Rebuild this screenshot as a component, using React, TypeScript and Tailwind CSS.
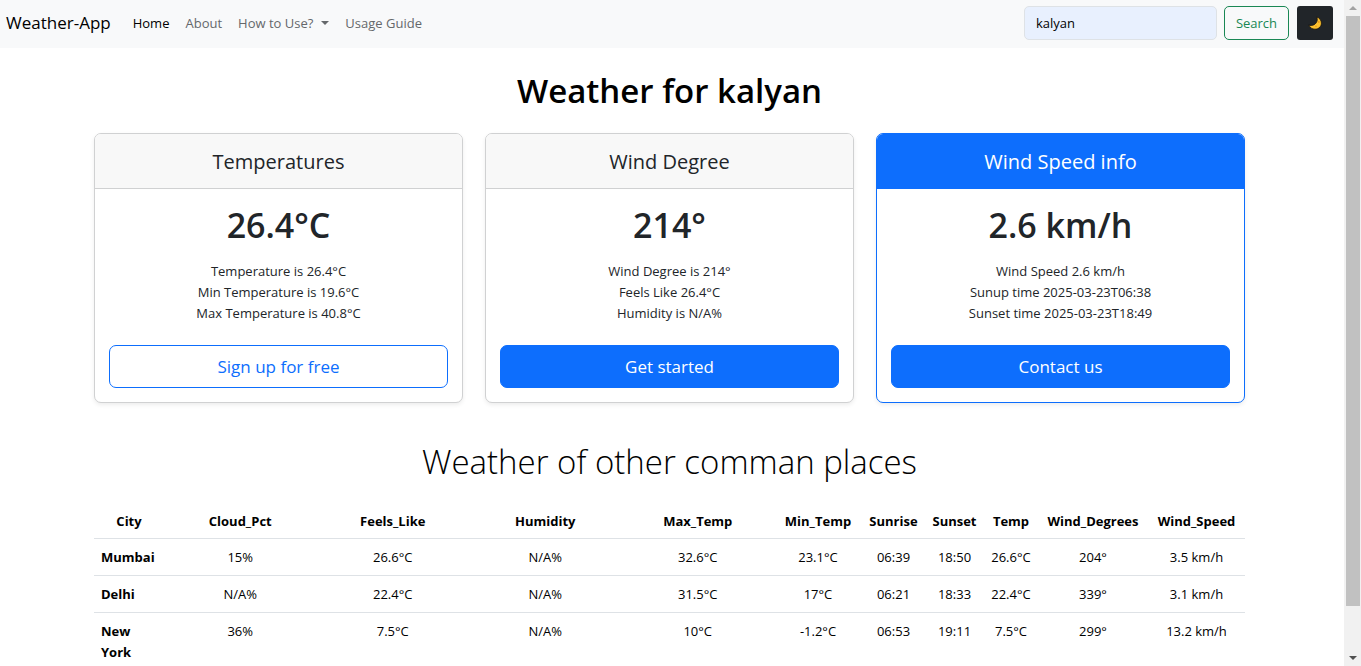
import { useState } from "react";

type Card = {
  title: string;
  value: string;
  lines: string[];
  action: string;
  outline?: boolean;
  highlight?: boolean;
};

const cards: Card[] = [
  {
    title: "Temperatures",
    value: "26.4°C",
    lines: ["Temperature is 26.4°C", "Min Temperature is 19.6°C", "Max Temperature is 40.8°C"],
    action: "Sign up for free",
    outline: true,
  },
  {
    title: "Wind Degree",
    value: "214°",
    lines: ["Wind Degree is 214°", "Feels Like 26.4°C", "Humidity is N/A%"],
    action: "Get started",
  },
  {
    title: "Wind Speed info",
    value: "2.6 km/h",
    lines: ["Wind Speed 2.6 km/h", "Sunup time 2025-03-23T06:38", "Sunset time 2025-03-23T18:49"],
    action: "Contact us",
    highlight: true,
  },
];

const columns = [
  { name: "City", width: "w-[70px]" },
  { name: "Cloud_Pct", width: "" },
  { name: "Feels_Like", width: "" },
  { name: "Humidity", width: "" },
  { name: "Max_Temp", width: "" },
  { name: "Min_Temp", width: "w-[88px]" },
  { name: "Sunrise", width: "w-[63px]" },
  { name: "Sunset", width: "w-[59px]" },
  { name: "Temp", width: "w-[54px]" },
  { name: "Wind_Degrees", width: "w-[110px]" },
  { name: "Wind_Speed", width: "w-[97px]" },
];

const places = [
  ["Mumbai", "15%", "26.6°C", "N/A%", "32.6°C", "23.1°C", "06:39", "18:50", "26.6°C", "204°", "3.5 km/h"],
  ["Delhi", "N/A%", "22.4°C", "N/A%", "31.5°C", "17°C", "06:21", "18:33", "22.4°C", "339°", "3.1 km/h"],
  ["New York", "36%", "7.5°C", "N/A%", "10°C", "-1.2°C", "06:53", "19:11", "7.5°C", "299°", "13.2 km/h"],
];

function Moon() {
  return (
    <svg viewBox="0 0 14 14" className="size-[14px]" aria-hidden="true">
      <path
        d="M8.6 1C10.1 3.9 8.900 7 6.100 8.700C4.300 9.700 2.300 9.700 .8 8.900C1.700 11.600 4.200 13.200 7 13.200C10.700 13.200 13.400 10.500 13.400 7.100C13.400 4.200 11.400 1.700 8.600 1Z"
        fill="#fdc12e"
        stroke="#15120c"
        strokeWidth=".8"
        strokeLinejoin="round"
      />
      <circle cx="10.800" cy="6" r=".9" fill="#e8961c" />
      <circle cx="8" cy="10.300" r=".8" fill="#e8961c" />
    </svg>
  );
}

function Navbar() {
  const [query, setQuery] = useState("kalyan");
  return (
    <nav className="flex items-center bg-[#f8f9fa] pt-[6px] pr-[11px] pb-2 pl-[6px]">
      <a href="#" className="mr-[22px] text-[17px] leading-[26px] text-black">
        Weather-App
      </a>
      <div className="flex flex-1 items-center gap-4 text-[#65686b]">
        <a href="#" className="text-black">Home</a>
        <a href="#about">About</a>
        <button type="button" className="flex items-center gap-2">
          How to Use?
          <svg viewBox="0 0 8 4" className="h-1 w-2" fill="currentColor" aria-hidden="true">
            <path d="M0 0H8L4 4Z" />
          </svg>
        </button>
        <a href="#guide">Usage Guide</a>
      </div>
      <form className="flex" onSubmit={(e) => e.preventDefault()}>
        <input
          type="search"
          aria-label="Search"
          value={query}
          onChange={(e) => setQuery(e.target.value)}
          className="mr-[7px] h-[34px] w-[193px] rounded-[5px] border border-[#dee2e6] bg-[#e8f0fe] px-[11px] text-black outline-none"
        />
        <button
          type="submit"
          className="mr-2 h-[34px] w-[65px] rounded-[5px] border border-[#198754] text-[#198754]"
        >
          Search
        </button>
        <button
          type="button"
          aria-label="Toggle dark mode"
          className="flex h-[34px] w-9 items-center justify-center rounded-[3px] bg-[#212529]"
        >
          <Moon />
        </button>
      </form>
    </nav>
  );
}

function WeatherCard({ card }: { card: Card }) {
  return (
    <section
      className={`overflow-hidden rounded-[7px] border bg-white shadow-[0_2px_4px_rgba(0,0,0,0.075)] ${
        card.highlight ? "border-[#0d6efd]" : "border-[#d0d1d2]"
      }`}
    >
      <h4
        className={`border-b pt-[15px] pb-[13px] text-[20px] leading-[26px] ${
          card.highlight ? "border-[#0d6efd] bg-[#0d6efd] text-white" : "border-[#d0d1d2] bg-[#f8f8f8]"
        }`}
      >
        {card.title}
      </h4>
      <div className="p-[14px]">
        <p className="text-[34px] leading-[44px] font-semibold">{card.value}</p>
        <ul className="mt-[14px] mb-[21px]">
          {card.lines.map((line) => (
            <li key={line}>{line}</li>
          ))}
        </ul>
        <button
          type="button"
          className={`h-[43px] w-full rounded-[7px] border border-[#0d6efd] text-[17px] ${
            card.outline ? "bg-white text-[#0d6efd]" : "bg-[#0d6efd] text-white"
          }`}
        >
          {card.action}
        </button>
      </div>
    </section>
  );
}

function Scrollbar() {
  return (
    <div className="flex w-[17px] shrink-0 flex-col items-center bg-[#f1f1f1]" aria-hidden="true">
      <div className="flex h-4 items-center">
        <svg viewBox="0 0 8 4" className="h-1 w-2" fill="#a3a3a3">
          <path d="M0 4H8L4 0Z" />
        </svg>
      </div>
      <div className="w-[14px] grow-[590] bg-[#c1c1c1]" />
      <div className="grow-[44]" />
      <div className="flex h-4 items-center">
        <svg viewBox="0 0 8 4" className="h-1 w-2" fill="#505050">
          <path d="M0 0H8L4 4Z" />
        </svg>
      </div>
    </div>
  );
}

export default function App() {
  return (
    <div className="flex h-screen bg-white font-['Open_Sans',sans-serif] text-[13px] leading-[21px] text-[#212529]">
      <div className="min-w-0 flex-1 overflow-hidden">
        <Navbar />
        <div className="pr-[5px] text-center">
          <main className="mx-auto max-w-[1151px]">
            <h1 className="pt-[22px] pb-[21px] text-[33px] leading-[42px] font-semibold text-black">
              Weather for kalyan
            </h1>
            <div className="grid grid-cols-3 gap-[22px]">
              {cards.map((card) => (
                <WeatherCard key={card.title} card={card} />
              ))}
            </div>
            <h2 className="pt-[38px] pb-[20px] text-[33px] leading-[42px] font-light text-black">
              Weather of other comman places
            </h2>
            <table className="w-full table-fixed text-black">
              <thead>
                <tr className="border-b border-[#dee2e6]">
                  {columns.map((c) => (
                    <th key={c.name} scope="col" className={`pt-2 pb-[6px] font-bold ${c.width}`}>
                      {c.name}
                    </th>
                  ))}
                </tr>
              </thead>
              <tbody>
                {places.map(([city, ...values]) => (
                  <tr key={city} className="border-b border-[#dee2e6]">
                    <th scope="row" className="px-[7px] pt-2 pb-[7px] text-left align-top font-bold">
                      {city}
                    </th>
                    {values.map((v, i) => (
                      <td key={i} className="pt-2 pb-[7px] align-top">
                        {v}
                      </td>
                    ))}
                  </tr>
                ))}
              </tbody>
            </table>
          </main>
        </div>
      </div>
      <Scrollbar />
    </div>
  );
}
